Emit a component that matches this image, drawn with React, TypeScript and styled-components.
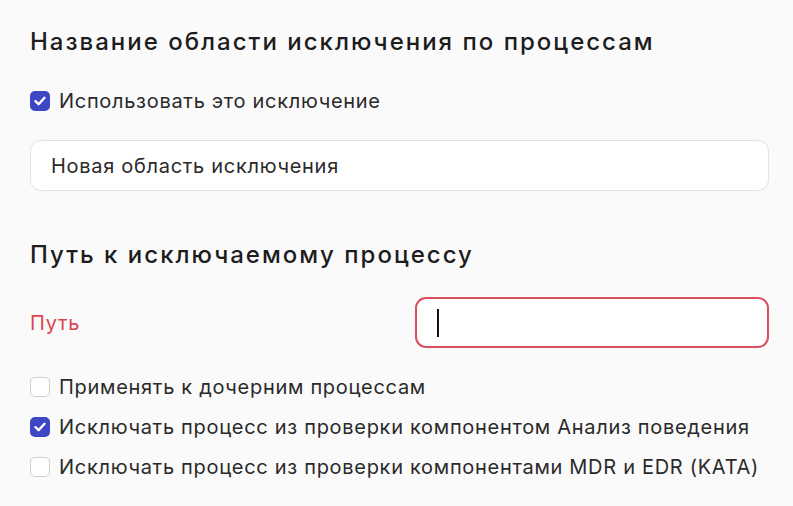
import styled, { createGlobalStyle } from 'styled-components'

const GlobalStyle = createGlobalStyle`
  html, body {
    margin: 0;
    padding: 0;
    background: #fafafa;
  }
  body {
    font-family: Inter, "Noto Sans", "Liberation Sans", sans-serif;
    color: #1f1f1f;
  }
`

const Page = styled.div`
  width: 739px;
  padding: 24px 0 0 30px;
  display: flex;
  flex-direction: column;
`

const SectionTitle = styled.h2<{ $gap: number }>`
  margin: 0 0 ${(p) => p.$gap}px;
  font-size: 24px;
  line-height: 36px;
  font-weight: 500;
  letter-spacing: 2px;
  color: #1d1d1d;
`

const CheckRow = styled.label<{ $after?: number }>`
  display: flex;
  align-items: center;
  gap: 9px;
  height: 40px;
  margin-bottom: ${(p) => p.$after ?? 0}px;
  font-size: 20px;
  letter-spacing: 0.7px;
  color: #2a2a2a;
`

const Box = styled.span<{ $checked?: boolean }>`
  width: 20px;
  height: 20px;
  box-sizing: border-box;
  border-radius: 5px;
  flex-shrink: 0;
  display: flex;
  align-items: center;
  justify-content: center;
  background: ${(p) => (p.$checked ? '#3d47c4' : '#fff')};
  border: ${(p) => (p.$checked ? 'none' : '1.5px solid #cfcfcf')};
`

const TextInput = styled.div<{ $error?: boolean }>`
  box-sizing: border-box;
  height: 51px;
  display: flex;
  align-items: center;
  padding: 0 20px;
  background: #fff;
  border-radius: 11px;
  border: ${(p) => (p.$error ? '2px solid #d9505d' : '1.5px solid #e2e2e2')};
  font-size: 20px;
  letter-spacing: 0.7px;
  color: #2a2a2a;
`

const NameInput = styled(TextInput)`
  margin-bottom: 46px;
`

const Caret = styled.span`
  width: 2px;
  height: 28px;
  background: #111;
`

const FieldRow = styled.div`
  display: grid;
  grid-template-columns: 385px 354px;
  align-items: center;
  margin-bottom: 19px;
`

const FieldLabel = styled.span<{ $error?: boolean }>`
  font-size: 20px;
  letter-spacing: 0.7px;
  color: ${(p) => (p.$error ? '#dc4552' : '#2a2a2a')};
`

type CheckProps = { checked?: boolean; after?: number; children: string }

const Check = ({ checked, after, children }: CheckProps) => (
  <CheckRow $after={after}>
    <Box $checked={checked}>
      {checked && (
        <svg width="12" height="10" viewBox="0 0 12 10">
          <path d="M1.5 5.2 4.6 8.2 10.5 1.8" fill="none" stroke="#fff" strokeWidth="2.4" strokeLinecap="round" strokeLinejoin="round" />
        </svg>
      )}
    </Box>
    {children}
  </CheckRow>
)

export default function App() {
  return (
    <>
      <GlobalStyle />
      <Page>
        <SectionTitle $gap={21}>Название области исключения по процессам</SectionTitle>
        <Check checked after={19}>Использовать это исключение</Check>
        <NameInput>Новая область исключения</NameInput>
        <SectionTitle $gap={24}>Путь к исключаемому процессу</SectionTitle>
        <FieldRow>
          <FieldLabel $error>Путь</FieldLabel>
          <TextInput $error>
            <Caret />
          </TextInput>
        </FieldRow>
        <Check>Применять к дочерним процессам</Check>
        <Check checked>Исключать процесс из проверки компонентом Анализ поведения</Check>
        <Check>Исключать процесс из проверки компонентами MDR и EDR (KATA)</Check>
      </Page>
    </>
  )
}
